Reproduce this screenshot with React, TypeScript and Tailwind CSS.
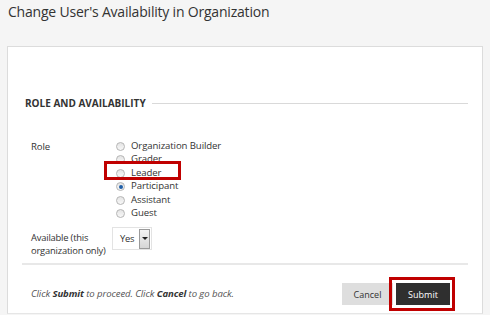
import React from "react";

const Radio = ({ checked }: { checked?: boolean }) => (
  <span className="relative inline-block w-[9px] h-[9px] rounded-full border border-[#b5b5b5] bg-gradient-to-b from-[#e4e4e4] to-[#f8f8f8] shrink-0">
    {checked && <span className="absolute left-[1.5px] top-[1.5px] w-[4px] h-[4px] rounded-full bg-[#1f5fa8]" />}
  </span>
);

const roles = ["Organization Builder", "Grader", "Leader", "Participant", "Assistant", "Guest"];

export default function App() {
  return (
    <div className="w-[490px] h-[315px] overflow-hidden bg-[#f5f5f5] text-[#333]" style={{ fontFamily: '"Open Sans", "Noto Sans", sans-serif' }}>
      <div className="pl-[8px] pt-[2px] h-[46px] text-[14px] tracking-[-0.2px] leading-[20px] text-[#333]">Change User's Availability in Organization</div>
      <div className="ml-[7px] w-[476px] h-[268px] bg-white border border-[#dcdcdc] border-b-[#e6e6e6]">
        <div className="flex items-center pl-[17px] pr-[14px] mt-[50px]">
          <span className="text-[10px] font-bold text-[#333] leading-[13px]">ROLE AND AVAILABILITY</span>
          <span className="flex-1 h-[1px] bg-[#d9d9d9] ml-[6px]" />
        </div>
        <div className="flex pl-[23px] mt-[29px] text-[9.6px] tracking-[-0.1px] leading-[13.4px] text-[#333]">
          <div className="w-[85px] pt-[1px]">Role</div>
          <div className="flex flex-col">
            {roles.map((r, i) => (
              <div key={r} className="relative flex items-center h-[13.4px]">
                <span className="mt-[4px] mr-[6px]"><Radio checked={i === 3} /></span>
                <span>{r}</span>
                {r === "Leader" && (
                  <span className="absolute left-[-12px] top-[-5px] w-[77px] h-[19px] border-[3px] border-[#c00000]" />
                )}
              </div>
            ))}
          </div>
        </div>
        <div className="flex pl-[23px] mt-[10px] text-[9.4px] tracking-[-0.2px] leading-[13px] text-[#333]">
          <div className="w-[81px] pt-[2px] whitespace-nowrap">Available (this<br />organization only)</div>
          <div className="flex items-center h-[23px] w-[40px] border border-[#e3e3e3] bg-white pl-[7px] mt-[-2px]">
            <span>Yes</span>
            <span className="ml-auto mr-[1px] w-[11px] h-[20px] border border-[#9a9a9a] bg-gradient-to-b from-[#f4f4f4] to-[#d6d6d6] flex items-center justify-center">
              <span className="w-0 h-0 border-l-[3px] border-r-[3px] border-t-[3px] border-l-transparent border-r-transparent border-t-[#222]" />
            </span>
          </div>
        </div>
        <div className="mx-[14px] mt-[6px] h-[2px] bg-[#e8e8e8]" />
        <div className="flex items-center pl-[23px] pr-[32px] mt-[18px]">
          <span className="italic text-[9.6px] tracking-[-0.1px] text-[#555]">Click <b className="text-[#333]">Submit</b> to proceed. Click <b className="text-[#333]">Cancel</b> to go back.</span>
          <div className="ml-auto flex">
            <span className="w-[51px] h-[22px] bg-[#dedede] flex items-center justify-center text-[9px] text-[#333]">Cancel</span>
            <span className="relative ml-[3px] w-[54px] h-[22px] bg-[#2f2f2f] flex items-center justify-center text-[9px] text-white">
              Submit
              <span className="absolute left-[-7px] top-[-6px] w-[66px] h-[34px] border-[3px] border-[#c00000]" />
            </span>
          </div>
        </div>
      </div>
    </div>
  );
}
